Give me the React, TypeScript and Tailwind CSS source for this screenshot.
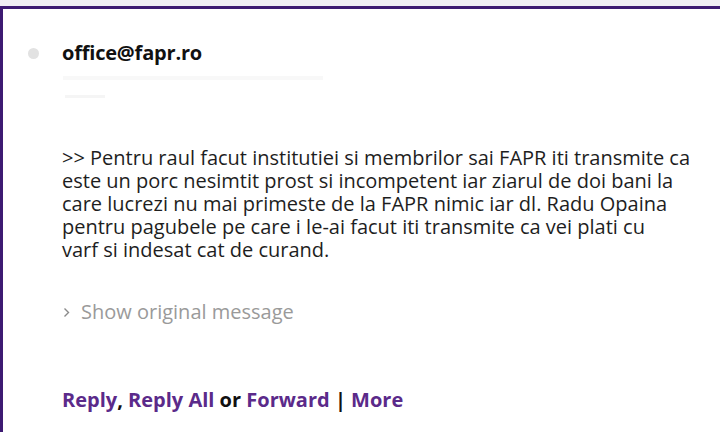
import React from "react";

const lines = [
  ">> Pentru raul facut institutiei si membrilor sai FAPR iti transmite ca",
  "este un porc nesimtit prost si incompetent iar ziarul de doi bani la",
  "care lucrezi nu mai primeste de la FAPR nimic iar dl. Radu Opaina",
  "pentru pagubele pe care i le-ai facut iti transmite ca vei plati cu",
  "varf si indesat cat de curand.",
];

export default function App() {
  return (
    <div className="w-[720px] h-[432px] overflow-hidden bg-white flex flex-col" style={{ fontFamily: '"Open Sans", "Noto Sans", sans-serif' }}>
      <div className="h-[6px] bg-[#f0eef4] shrink-0" />
      <div className="flex-1 border-t-[3px] border-l-[3px] border-[#3d1a72] flex flex-col">
        <div className="flex items-center pt-[32px]">
          <div className="ml-[25px] w-[11px] h-[11px] rounded-full bg-[#e2e2e2]" />
          <div className="ml-[23px] text-[20px] font-bold text-[#111] leading-[24px] tracking-[-0.2px]">office@fapr.ro</div>
        </div>
        <div className="ml-[60px] mt-[11px] h-[4px] w-[260px] bg-[#f8f8f8]" />
        <div className="ml-[62px] mt-[15px] h-[3px] w-[40px] bg-[#f5f5f5]" />
        <div className="ml-[59px] mt-[48px] text-[20px] leading-[23px] text-[#1e1e1e]">
          {lines.map((l, i) => (
            <div key={i} className="whitespace-nowrap">{l}</div>
          ))}
        </div>
        <div className="ml-[60px] mt-[39px] flex items-center gap-[11px] text-[20px] text-[#9a9a9a] leading-[24px]">
          <svg width="7" height="11" viewBox="0 0 7 11" className="mt-[1px]">
            <path d="M1.5 1.5 L5.5 5.5 L1.5 9.5" fill="none" stroke="#8a8a8a" strokeWidth="1.4" />
          </svg>
          <span>Show original message</span>
        </div>
        <div className="ml-[59px] mt-[64px] text-[20px] font-bold leading-[24px] text-[#111]">
          <span className="text-[#5b2a8a]">Reply</span>,{" "}
          <span className="text-[#5b2a8a]">Reply All</span> or{" "}
          <span className="text-[#5b2a8a]">Forward</span> |{" "}
          <span className="text-[#5b2a8a]">More</span>
        </div>
      </div>
    </div>
  );
}
